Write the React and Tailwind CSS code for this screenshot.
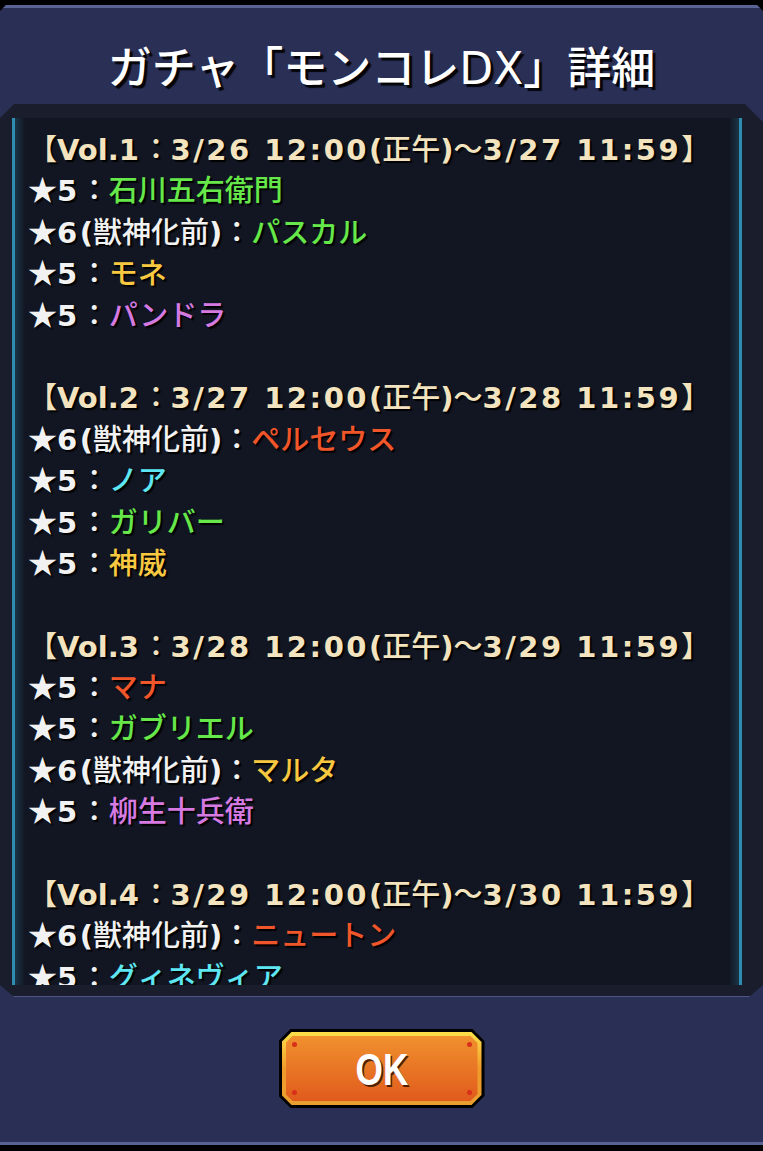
const FONT = { fontFamily: '"DejaVu Sans", "Noto Sans CJK JP", sans-serif' };
const CJK = { fontFamily: '"Noto Sans CJK JP", sans-serif' };

const COLORS = {
  green: "text-[#66e84a]",
  yellow: "text-[#f7c840]",
  pink: "text-[#d67ae2]",
  red: "text-[#f0562a]",
  cyan: "text-[#5ee6f2]",
};

const VOLS = [
  {
    head: "【Vol.1：3/26 12:00(正午)〜3/27 11:59】",
    units: [
      ["★5：", "石川五右衛門", "green"],
      ["★6(獣神化前)：", "パスカル", "green"],
      ["★5：", "モネ", "yellow"],
      ["★5：", "パンドラ", "pink"],
    ],
  },
  {
    head: "【Vol.2：3/27 12:00(正午)〜3/28 11:59】",
    units: [
      ["★6(獣神化前)：", "ペルセウス", "red"],
      ["★5：", "ノア", "cyan"],
      ["★5：", "ガリバー", "green"],
      ["★5：", "神威", "yellow"],
    ],
  },
  {
    head: "【Vol.3：3/28 12:00(正午)〜3/29 11:59】",
    units: [
      ["★5：", "マナ", "red"],
      ["★5：", "ガブリエル", "green"],
      ["★6(獣神化前)：", "マルタ", "yellow"],
      ["★5：", "柳生十兵衛", "pink"],
    ],
  },
  {
    head: "【Vol.4：3/29 12:00(正午)〜3/30 11:59】",
    units: [
      ["★6(獣神化前)：", "ニュートン", "red"],
      ["★5：", "グィネヴィア", "cyan"],
    ],
  },
];

const SHADOW = "[text-shadow:2px_2px_1px_rgba(0,0,0,0.95)]";

// digits in the game font sit wider apart than DejaVu's, so space them out
function Spaced({ text }) {
  return text.split(/(★|[0-9/: ]+|[\u3000-\u9fff\uff00-\uffef]+)/).map((part, i) => {
    if (!part) return null;
    if (part === "★") {
      return (
        <span key={i} className="leading-none" style={CJK}>
          ★
        </span>
      );
    }
    if (/^[0-9/: ]+$/.test(part)) {
      return (
        <span key={i} className="tracking-[2.5px]">
          {part}
        </span>
      );
    }
    if (/^[\u3000-\u9fff\uff00-\uffef]+$/.test(part)) {
      return (
        <span key={i} className="font-medium leading-none">
          {part}
        </span>
      );
    }
    return part;
  });
}

function Row({ children, className = "" }) {
  return <div className={`h-[41.4px] ${className}`}>{children}</div>;
}

export default function App() {
  return (
    <div className="w-[763px] h-[1151px] bg-black flex flex-col overflow-hidden" style={FONT}>
      <div className="h-[5px] shrink-0" />
      <div className="flex-1 flex flex-col bg-[#2a2f56] border-t-[3px] border-b-[3px] border-[#5a6494] [clip-path:polygon(6px_0,calc(100%_-_6px)_0,100%_6px,100%_100%,0_100%,0_6px)]">
        <div className="h-[96px] shrink-0 flex justify-center pt-[39px]">
          <h1 className="text-[44px] leading-none font-medium text-white [text-shadow:3px_3px_1px_rgba(0,0,0,0.9)]">
            ガチャ「モンコレDX」詳細
          </h1>
        </div>

        <div className="h-[893px] shrink-0 bg-[#1a1e2c] border-b border-[#4d5584] pt-[14px] pb-[11px] pl-[12px] pr-[21px] [clip-path:polygon(14px_0,calc(100%_-_18px)_0,100%_18px,100%_calc(100%_-_12px),calc(100%_-_14px)_100%,14px_100%,0_calc(100%_-_12px),0_14px)]">
          <div className="h-full bg-[#121622] border-l-[3px] border-r-[3px] border-[#2e8db0] overflow-hidden relative">
            <div className="absolute inset-y-0 left-0 w-[10px] bg-gradient-to-r from-[#1f4a60]/60 to-transparent" />
            <div className="absolute inset-y-0 right-0 w-[10px] bg-gradient-to-l from-[#1f4a60]/60 to-transparent" />
            <div className={`relative pt-[12px] pl-[13px] text-[29px] leading-[41.4px] font-bold text-[#f2f2f2] whitespace-nowrap ${SHADOW}`}>
              {VOLS.map((vol, i) => (
                <div key={vol.head}>
                  {i > 0 && <Row />}
                  <Row className="text-[#f3e4bf]">
                    <Spaced text={vol.head} />
                  </Row>
                  {vol.units.map(([label, name, color]) => (
                    <Row key={name}>
                      <Spaced text={label} />
                      <span className={`font-medium leading-none ${COLORS[color]}`}>{name}</span>
                    </Row>
                  ))}
                </div>
              ))}
            </div>
          </div>
        </div>

        <div className="flex-1 flex items-start justify-center pt-[32px]">
          <button className="w-[206px] h-[79px] bg-black p-[3px] [clip-path:polygon(12px_0,calc(100%_-_12px)_0,100%_12px,100%_calc(100%_-_12px),calc(100%_-_12px)_100%,12px_100%,0_calc(100%_-_12px),0_12px)]">
            <div className="relative w-full h-full bg-gradient-to-b from-[#fbe04a] via-[#f09a2a] to-[#e8a030] p-[4px] [clip-path:polygon(10px_0,calc(100%_-_10px)_0,100%_10px,100%_calc(100%_-_10px),calc(100%_-_10px)_100%,10px_100%,0_calc(100%_-_10px),0_10px)]">
              <div className="relative w-full h-full flex items-center justify-center bg-gradient-to-b from-[#f0902e] to-[#e05a1c] [clip-path:polygon(7px_0,calc(100%_-_7px)_0,100%_7px,100%_calc(100%_-_7px),calc(100%_-_7px)_100%,7px_100%,0_calc(100%_-_7px),0_7px)]">
                <span className="absolute left-[6px] top-[6px] w-[5px] h-[5px] rounded-full bg-[#d8301a]" />
                <span className="absolute right-[6px] top-[6px] w-[5px] h-[5px] rounded-full bg-[#d8301a]" />
                <span className="absolute left-[6px] bottom-[6px] w-[5px] h-[5px] rounded-full bg-[#d8301a]" />
                <span className="absolute right-[6px] bottom-[6px] w-[5px] h-[5px] rounded-full bg-[#d8301a]" />
                <span
                  className="text-[44px] leading-none font-bold text-white [text-shadow:2px_2px_0_rgba(60,20,0,0.9)] scale-x-[0.8] pt-[2px]"
                  style={{ fontFamily: '"Liberation Sans", sans-serif' }}
                >
                  OK
                </span>
              </div>
            </div>
          </button>
        </div>
      </div>
      <div className="h-[6px] shrink-0" />
    </div>
  );
}
